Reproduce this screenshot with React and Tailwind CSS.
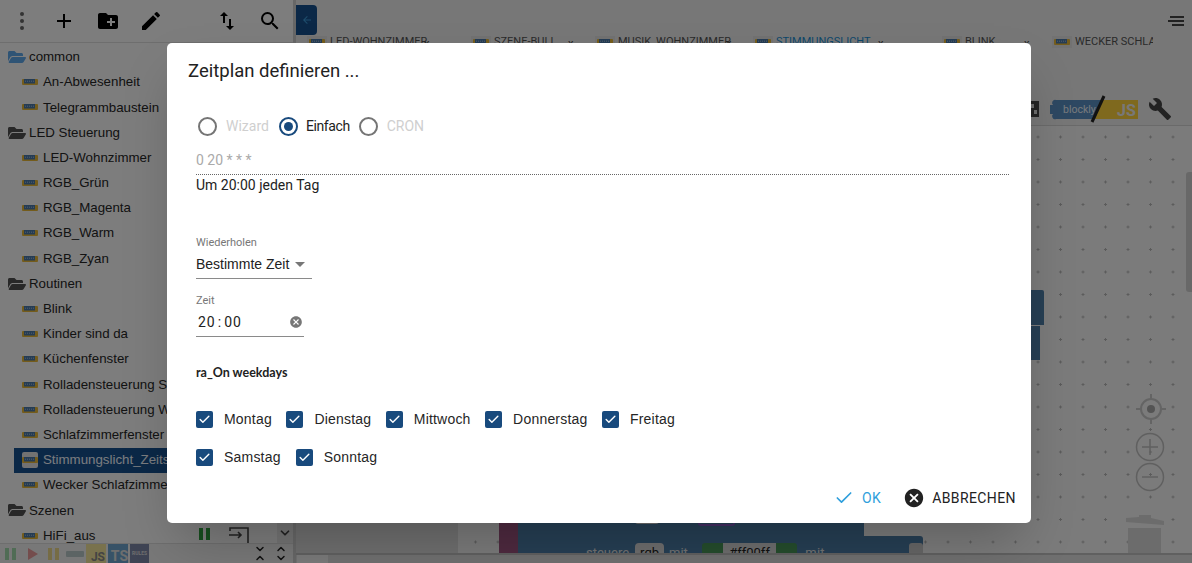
import React from "react";
import { Check, ChevronDown, ChevronUp } from "lucide-react";
import { MdAdd, MdCreateNewFolder, MdEdit, MdImportExport, MdSearch, MdCancel, MdBuild, MdArrowBack } from "react-icons/md";
import { FaFolderOpen } from "react-icons/fa";

const ScriptIcon = ({ light, w = "w-[16px]" }) => (
    <span className={"flex h-[16px] shrink-0 items-center justify-center rounded-[2px] " + w + (light ? " bg-[#e4e4e4]" : "")}>
        <svg width="16" height="6" viewBox="0 0 16 6">
            <rect x="0" y="0" width="16" height="6" rx="1" fill="#e8b838" />
            <rect x="2" y="0" width="11" height="4.5" fill="#4a78a8" />
            <path d="M3 2.2h9" stroke="#a8c0d8" strokeWidth="1" strokeDasharray="1 1" />
        </svg>
    </span>
);

const tree = [
    { name: "common", folder: true, color: "#5fa8ea" },
    { name: "An-Abwesenheit" },
    { name: "Telegrammbaustein" },
    { name: "LED Steuerung", folder: true, color: "#505050" },
    { name: "LED-Wohnzimmer" },
    { name: "RGB_Grün" },
    { name: "RGB_Magenta" },
    { name: "RGB_Warm" },
    { name: "RGB_Zyan" },
    { name: "Routinen", folder: true, color: "#505050" },
    { name: "Blink" },
    { name: "Kinder sind da" },
    { name: "Küchenfenster" },
    { name: "Rolladensteuerung Sonnenuntergang" },
    { name: "Rolladensteuerung Wochenende" },
    { name: "Schlafzimmerfenster" },
    { name: "Stimmungslicht_Zeitschaltuhr", selected: true },
    { name: "Wecker Schlafzimmer" },
    { name: "Szenen", folder: true, color: "#505050" },
    { name: "HiFi_aus" },
];

const tabs = [
    { label: "LED-WOHNZIMMER", w: "w-[164px]", x: "left-[117px]" },
    { label: "SZENE-BULL", w: "w-[124px]", x: "left-[97px]" },
    { label: "MUSIK_WOHNZIMMER", w: "w-[158px]", x: "left-[131px]" },
    { label: "STIMMUNGSLICHT", w: "w-[189px]", x: "left-[125px]", active: true },
    { label: "BLINK", w: "w-[110px]", x: "left-[82px]" },
    { label: "WECKER SCHLAF", w: "w-[101px]" },
];

const row1 = ["Montag", "Dienstag", "Mittwoch", "Donnerstag", "Freitag"];
const row2 = ["Samstag", "Sonntag"];

const TreeRow = ({ item }) => (
    <div className={"flex h-[25.2px] shrink-0 items-center whitespace-nowrap text-[13.3px] " + (item.folder ? "pl-[8px] " : "ml-[14px] pl-[8px] ") + (item.selected ? "bg-[#16518f] text-[#f4f8ff]" : "text-[#262626]")}>
        {item.folder ? <FaFolderOpen size={18} color={item.color} /> : <ScriptIcon light={item.selected} />}
        <span className={item.folder ? "ml-[3px]" : "ml-[5px]"}>{item.name}</span>
    </div>
);

const Radio = ({ label, checked }) => (
    <div className="flex items-center">
        <span className={"flex h-[19px] w-[19px] items-center justify-center rounded-full border-2 " + (checked ? "border-[#184a7d]" : "border-[#757575]")}>
            {checked && <span className="h-[9px] w-[9px] rounded-full bg-[#184a7d]" />}
        </span>
        <span className={checked ? "ml-[8px] mr-[9px] tracking-[-0.4px] text-[#222222]" : "ml-[9px] mr-[10px] text-[#cfcfcf]"}>{label}</span>
    </div>
);

const Day = ({ label }) => (
    <div className="flex items-center">
        <span className="flex h-[17px] w-[17px] items-center justify-center rounded-[2px] bg-[#184a7d]">
            <Check size={13} strokeWidth={2.6} className="text-white" />
        </span>
        <span className="ml-[11px] tracking-[0.2px] text-[#262626]">{label}</span>
    </div>
);

const App = () => {
    return (
        <div className="relative flex h-screen w-full overflow-hidden bg-white [font-family:Roboto,sans-serif]">

            {/* left tree */}
            <aside className="flex w-[296px] shrink-0 flex-col border-r-[3px] border-[#cfcfcf] bg-[#fbfbfb]">
                <div className="flex h-[43px] shrink-0 items-center border-b border-[#dddddd] text-black">
                    <div className="ml-[20px] flex h-[18px] w-[4px] flex-col justify-between">
                        <span className="h-[4px] w-[4px] rounded-full bg-[#666666]" />
                        <span className="h-[4px] w-[4px] rounded-full bg-[#666666]" />
                        <span className="h-[4px] w-[4px] rounded-full bg-[#666666]" />
                    </div>
                    <MdAdd size={24} className="ml-[28px]" />
                    <MdCreateNewFolder size={24} className="ml-[20px]" />
                    <MdEdit size={24} className="ml-[19px]" />
                    <MdImportExport size={24} className="ml-[52px]" />
                    <MdSearch size={24} className="ml-[19px]" />
                </div>
                <div className="relative flex flex-1 flex-col overflow-hidden pt-[1.5px] [font-family:'Liberation_Sans',sans-serif]">
                    {tree.map((item) => <TreeRow key={item.name} item={item} />)}
                    <div className="absolute right-0 top-[479px] flex h-[21px] w-[16px] items-center justify-center bg-[#e8e8e8]">
                        <ChevronDown size={14} strokeWidth={3} className="text-[#444444]" />
                    </div>
                    <div className="absolute left-[199px] top-[485px] flex gap-[3px]">
                        <span className="h-[12px] w-[4px] bg-[#2e9e3e]" />
                        <span className="h-[12px] w-[4px] bg-[#2e9e3e]" />
                    </div>
                    <svg className="absolute left-[229px] top-[484px]" width="20" height="16" viewBox="0 0 20 16" fill="none" stroke="#444444" strokeWidth="1.6">
                        <path d="M1 4V1H19V16" />
                        <path d="M0 8H12M9 5l3 3-3 3" />
                    </svg>
                </div>
                <div className="flex h-[20px] shrink-0 items-center border-t border-[#dddddd] bg-[#f0f0f0] text-[9px] font-bold">
                    <div className="ml-[5px] flex gap-[3px]">
                        <span className="h-[12px] w-[4px] bg-[#a0d8aa]" />
                        <span className="h-[12px] w-[4px] bg-[#a0d8aa]" />
                    </div>
                    <span className="ml-[12px] h-0 w-0 border-y-[6px] border-l-[10px] border-y-transparent border-l-[#e89a9a]" />
                    <div className="ml-[10px] flex gap-[3px]">
                        <span className="h-[12px] w-[4px] bg-[#ecd98a]" />
                        <span className="h-[12px] w-[4px] bg-[#ecd98a]" />
                    </div>
                    <span className="ml-[7px] h-[6px] w-[18px] rounded-[1px] bg-[#b8c8c8]" />
                    <span className="ml-[2px] flex h-[20px] w-[20px] items-end justify-end bg-[#f2e59a] pr-[1px] text-[12px] leading-[14px] text-[#888888]">JS</span>
                    <span className="ml-[2px] flex h-[20px] w-[20px] items-end justify-end bg-[#6fa5cf] text-[14px] leading-[16px] text-[#dddddd]">TS</span>
                    <span className="ml-[2px] flex h-[20px] w-[19px] items-center justify-center bg-[#7f88a8] text-[5px] text-[#dddddd]">RULES</span>
                    <span className="ml-[105px] flex flex-col text-[#222222]"><ChevronDown size={12} strokeWidth={3} className="-mb-[3px]" /><ChevronUp size={12} strokeWidth={3} /></span>
                    <span className="ml-[9px] flex flex-col text-[#222222]"><ChevronUp size={12} strokeWidth={3} className="-mb-[3px]" /><ChevronDown size={12} strokeWidth={3} /></span>
                </div>
            </aside>

            {/* editor */}
            <main className="flex min-w-0 flex-1 flex-col bg-[#efefef]">
                <div className="flex h-[126px] shrink-0 flex-col border-b border-[#d4d4d4]">
                    <div className="flex items-start justify-between">
                        <div className="mt-[5px] flex h-[30px] w-[21px] items-center justify-center rounded-r-[4px] bg-[#16518f]">
                            <MdArrowBack size={12} className="text-[#3a9ad9]" />
                        </div>
                        <div className="mr-[8px] mt-[16px] flex w-[16px] flex-col items-end gap-[2px]">
                            <span className="h-[2px] w-[14px] bg-[#444444]" />
                            <span className="h-[2px] w-[16px] bg-[#444444]" />
                            <span className="h-[2px] w-[12px] bg-[#444444]" />
                        </div>
                    </div>
                    <div className="mt-[1px] flex pl-[11px]">
                        {tabs.map((t) => (
                            <div key={t.label} className={"relative flex h-[12px] shrink-0 items-center overflow-hidden text-[11px] " + t.w + (t.active ? " text-[#1c8fd6]" : " text-[#555555]")}>
                                <ScriptIcon light w="w-[20px]" />
                                <span className="ml-[3px] whitespace-nowrap">{t.label}</span>
                                {t.x && <span className={"absolute top-0 text-[#444444] " + t.x}>x</span>}
                            </div>
                        ))}
                    </div>
                    <div className="mr-[20px] mt-[49px] flex items-center justify-end">
                        <svg className="mr-[11px]" width="12" height="16" viewBox="0 0 12 16" fill="#4a4a4a">
                            <path d="M0 0h12v16H0Z" />
                            <path d="M3 3h4v4H3ZM7 9h3v4H7Z" fill="#dddddd" />
                        </svg>
                        <svg className="overflow-visible" width="88" height="20" viewBox="0 0 88 20">
                            <rect x="45" y="1" width="43" height="19" fill="#ffd23c" />
                            <path d="M0 6h3a3 3 0 0 1 3-5h46l-7 19H6a3 3 0 0 1-3-5H0Z" fill="#5a90c4" />
                            <text x="13" y="14" fontSize="10.5" fill="#eef4fa" fontFamily="Roboto, sans-serif">blockly</text>
                            <text x="67" y="17" fontSize="16" fontWeight="700" fill="#f0f0f0" fontFamily="Roboto, sans-serif">JS</text>
                            <path d="M54 -3 42 23" stroke="#222222" strokeWidth="3" />
                        </svg>
                        <MdBuild size={24} className="ml-[10px] text-[#444444]" />
                    </div>
                </div>

                <div className="flex min-h-0 flex-1">
                    <div className="w-[162px] shrink-0 bg-[#dedede]" />
                    <div className="relative flex-1 overflow-hidden bg-[#f6f6f6]">
                        <svg className="absolute inset-0 h-full w-full">
                            <defs>
                                <pattern id="grid" x="6.25" y="-0.25" width="22.5" height="22.5" patternUnits="userSpaceOnUse">
                                    <path d="M9.75 11.25h3M11.25 9.75v3" stroke="#b8b8b8" strokeWidth="1" />
                                </pattern>
                            </defs>
                            <rect width="100%" height="100%" fill="url(#grid)" />
                        </svg>
                        <div className="absolute left-[41px] top-[397px] h-[32px] w-[19px] bg-[#9e5480]" />
                        <div className="absolute left-[60px] top-[390px] h-[40px] w-[346px] bg-[#4d7ea8]">
                            <span className="absolute left-[117px] top-0 h-[8px] w-[24px] rounded-b-[3px] bg-[#dddddd]" />
                            <span className="absolute left-[180px] top-0 h-[10px] w-[37px] rounded-b-[3px] border-2 border-t-0 border-[#8a5cc8]" />
                            <span className="absolute left-[328px] top-0 h-[4px] w-[12px] rounded-b-[3px] bg-[#cccccc]" />
                        </div>
                        <div className="absolute left-[120px] top-[410px] flex h-[20px] w-[345px] items-start rounded-t-[3px] bg-[#4d7ea8] pl-[8px] pt-[7px] text-[13px] leading-[20px] text-[#e6e6e6]">
                            <span>steuere</span>
                            <span className="ml-[6px] rounded-[4px] bg-[#dddddd] px-[5px] text-[#222222]">rgb</span>
                            <span className="ml-[5px]">mit</span>
                            <span className="ml-[14px] flex h-[20px] w-[96px] items-center justify-center rounded-[3px] bg-[#4a9a5a] text-[#222222]">
                                <span className="bg-[#dddddd] px-[6px]">#ff00ff</span>
                            </span>
                            <span className="ml-[8px] tracking-[0.2px]">mit Verzögerung</span>
                            <span className="ml-[6px] h-[14px] w-[14px] rounded-[3px] bg-[#cccccc]" />
                        </div>
                        <div className="absolute left-[572px] top-[164px] h-[35px] w-[14px] rounded-tr-[2px] bg-[#4d7ea8]" />
                        <div className="absolute left-[572px] top-[200px] h-[34px] w-[10px] bg-[#4d7ea8]" />
                        <div className="absolute right-0 top-[46px] h-[120px] w-[6px] rounded-l-[3px] bg-[#d0d0d0]" />
                        <svg className="absolute left-[677px] top-[267px]" width="32" height="32" viewBox="0 0 32 32" fill="none" stroke="#c8c8c8" strokeWidth="2">
                            <circle cx="16" cy="16" r="10" />
                            <circle cx="16" cy="16" r="4" fill="#a8a8a8" stroke="none" />
                            <path d="M16 1v5M16 26v5M1 16h5M26 16h5" />
                        </svg>
                        <svg className="absolute left-[677px] top-[306px]" width="30" height="30" viewBox="0 0 30 30" fill="none" stroke="#c0c0c0" strokeWidth="1.5">
                            <circle cx="15" cy="15" r="13.5" />
                            <path d="M15 7v16M7 15h16" />
                        </svg>
                        <svg className="absolute left-[677px] top-[336px]" width="30" height="30" viewBox="0 0 30 30" fill="none" stroke="#c0c0c0" strokeWidth="1.5">
                            <circle cx="15" cy="15" r="13.5" />
                            <path d="M7 15h16" />
                        </svg>
                        <svg className="absolute left-[666px] top-[389px]" width="42" height="38" viewBox="0 0 42 38" fill="#d8d8d8">
                            <path d="M2 3 15 2V0H27V3L40 6V10L2 7Z" />
                            <rect x="4" y="13" width="33" height="25" />
                        </svg>
                    </div>
                </div>

                <div className="flex h-[10px] shrink-0 border-t-2 border-[#c0c0c0] bg-[#e0e0e0]">
                    <div className="ml-[1px] w-[31px] bg-[#f4f4f4]" />
                </div>
            </main>

            <div className="absolute inset-0 bg-black/50" />

            {/* dialog */}
            <div className="absolute left-[167px] top-[43px] flex h-[480px] w-[864px] flex-col rounded-[5px] bg-white shadow-2xl">
                <div className="flex h-[58px] shrink-0 items-center pl-[21px] text-[18.5px] text-[#222222]">Zeitplan definieren ...</div>
                <div className="flex min-h-0 flex-1 flex-col pl-[29px] pr-[22px] pt-[13px]">
                    <div className="flex h-[24px] items-center pl-[2px] text-[14px]">
                        <Radio label="Wizard" />
                        <Radio label="Einfach" checked />
                        <Radio label="CRON" />
                    </div>
                    <div className="flex h-[37px] items-end border-b border-dotted border-[#666666] pb-[4px] text-[14px] leading-[20px] text-[#aaaaaa]">0 20 * * *</div>
                    <div className="h-[20px] text-[14px] leading-[20px] text-[#222222]">Um 20:00 jeden Tag</div>

                    <div className="mt-[40px] h-[15px] text-[11px] leading-[16px] text-[#777777]">Wiederholen</div>
                    <div className="flex h-[29px] w-[116px] items-center border-b border-[#8a8a8a] text-[14px] text-[#222222]">
                        <span className="[font-family:'Liberation_Sans',sans-serif]">Bestimmte Zeit</span>
                        <span className="ml-[6px] h-0 w-0 border-x-[5px] border-t-[5px] border-x-transparent border-t-[#777777]" />
                    </div>

                    <div className="mt-[14px] h-[15px] text-[11px] leading-[16px] text-[#777777]">Zeit</div>
                    <div className="flex h-[29px] w-[108px] items-center border-b border-[#8a8a8a] pl-[2px] text-[14px] tracking-[1px] text-[#222222]">
                        <span>20</span>
                        <span className="mx-[2px]">:</span>
                        <span>00</span>
                        <MdCancel size={14} className="ml-auto mr-[1px] text-[#777777]" />
                    </div>

                    <div className="mt-[26px] h-[19px] text-[12.5px] font-bold leading-[20px] text-[#222222] [font-family:Lato,sans-serif]">ra_On weekdays</div>

                    <div className="mt-[18px] flex h-[38px] items-center gap-[14.5px] text-[14px] [font-family:'Liberation_Sans',sans-serif]">
                        {row1.map((d) => <Day key={d} label={d} />)}
                    </div>
                    <div className="flex h-[38px] items-center gap-[15px] text-[14px] [font-family:'Liberation_Sans',sans-serif]">
                        {row2.map((d) => <Day key={d} label={d} />)}
                    </div>
                </div>
                <div className="mb-[7px] mr-[15px] flex h-[36px] shrink-0 items-center justify-end text-[14px] tracking-[0.4px]">
                    <Check size={20} strokeWidth={2} className="text-[#2f9fdc]" />
                    <span className="ml-[8px] text-[#2f9fdc]">OK</span>
                    <MdCancel size={22} className="ml-[22px] text-[#222222]" />
                    <span className="ml-[7px] text-[#222222]">ABBRECHEN</span>
                </div>
            </div>
        </div>
    )
}

export default App
